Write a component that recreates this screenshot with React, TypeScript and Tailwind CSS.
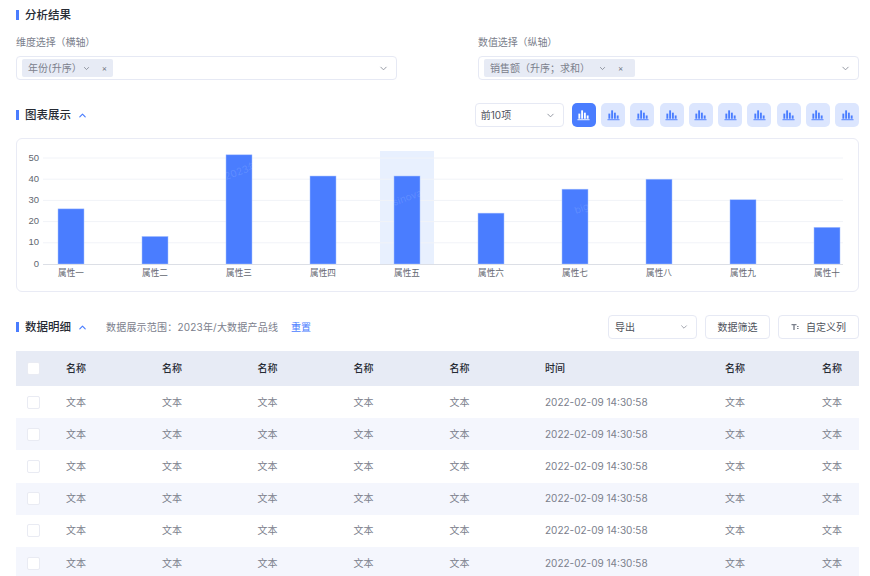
import React from "react";

const FONT = "[font-family:Inter,'Noto_Sans_CJK_SC',sans-serif]";

function Chevron({ className, up, sw = 1 }: { className?: string; up?: boolean; sw?: number }) {
  return (
    <svg viewBox="0 0 10 10" className={className} fill="none" stroke="currentColor" strokeWidth={sw} strokeLinecap="round" strokeLinejoin="round">
      <path d={up ? "M2 6.5 5 3.5 8 6.5" : "M2 3.5 5 6.5 8 3.5"} />
    </svg>
  );
}

function Heading({ text, toggle }: { text: string; toggle?: boolean }) {
  return (
    <div className="flex items-center">
      <span className="w-[3px] h-[10px] bg-[#4a7dff]" />
      <span className="ml-[6px] text-[11.5px] leading-[16px] font-medium text-[#262a33]">{text}</span>
      {toggle && <Chevron up sw={1.3} className="ml-[7px] w-[9px] h-[9px] text-[#4a7dff]" />}
    </div>
  );
}

function Tag({ text, width, gapA, gapB }: { text: string; width: string; gapA: string; gapB: string }) {
  return (
    <div className={`flex items-center h-[18px] rounded-[2px] bg-[#e7ebf5] pl-[6px] text-[10px] text-[#7b808c] ${width}`}>
      <span className="whitespace-nowrap">{text}</span>
      <Chevron className={`w-[7px] h-[7px] text-[#6d727e] ${gapA}`} />
      <span className={`text-[8px] leading-none text-[#6d727e] ${gapB}`}>×</span>
    </div>
  );
}

function Field({ label, tag }: { label: string; tag: React.ReactNode }) {
  return (
    <div className="w-[381px]">
      <div className="h-[16px] leading-[17px] text-[10px] text-[#7b808c] tracking-[-0.1px]">{label}</div>
      <div className="mt-[6px] flex items-center justify-between h-[24px] rounded-[4px] border border-[#e6e9f4] pl-[5px] pr-[8px] bg-white">
        {tag}
        <Chevron className="w-[9px] h-[9px] text-[#8a8f9a]" />
      </div>
    </div>
  );
}

function BarIcon({ active }: { active?: boolean }) {
  return (
    <div className={`flex items-center justify-center w-[24px] h-[24px] rounded-[5px] ${active ? "bg-[#4a7dff] text-white" : "bg-[#dce6fe] text-[#4a7dff]"}`}>
      <svg viewBox="0 0 14 12" className="w-[13px] h-[12px]" fill="currentColor">
        <rect x="1.5" y="4.5" width="2" height="5.5" />
        <rect x="4.5" y="1" width="2" height="9" />
        <rect x="7.5" y="3.5" width="2" height="6.5" />
        <rect x="10.5" y="6.5" width="2" height="3.5" />
        <rect x="0.5" y="10.6" width="13" height="1" />
      </svg>
    </div>
  );
}

const bars = [
  ["属性一", 26],
  ["属性二", 13],
  ["属性三", 51.5],
  ["属性四", 41.5],
  ["属性五", 41.5],
  ["属性六", 24],
  ["属性七", 35.3],
  ["属性八", 40],
  ["属性九", 30.3],
  ["属性十", 17.3],
] as const;

function Chart() {
  const y = (v: number) => 126 - v * 2.12;
  return (
    <svg viewBox="0 0 843 153" className="block w-[843px] h-[153px] absolute left-[-1px] top-[-1px]">
      <rect x="364" y="13" width="54" height="113" fill="#e8f0fe" />
      {[10, 20, 30, 40, 50].map((v) => (
        <line key={v} x1="27" x2="827" y1={y(v)} y2={y(v)} stroke="#f1f3f8" strokeWidth="1" />
      ))}
      {[0, 10, 20, 30, 40, 50].map((v) => (
        <text key={v} x="23" y={y(v) + 2.5} textAnchor="end" fontSize="9.5" fill="#63676f" className="[font-family:'Liberation_Sans',sans-serif]">{v}</text>
      ))}
      {bars.map(([name, v], i) => {
        const cx = 55 + i * 84;
        return (
          <g key={name}>
            <rect x={cx - 13} y={y(v)} width="26" height={126 - y(v)} fill="#4a7dff" stroke="#a9c2ff" strokeWidth="0.5" />
            <text x={cx} y="137.5" textAnchor="middle" fontSize="8.6" fill="#63676f">{name}</text>
          </g>
        );
      })}
      <line x1="27" x2="827" y1="126.5" y2="126.5" stroke="#dcdfe6" strokeWidth="1" />
      <g fill="#ffffff" fillOpacity="0.13" fontSize="10">
        <text transform="translate(210 42) rotate(-20)">2023年</text>
        <text transform="translate(378 68) rotate(-20)">sinova</text>
        <text transform="translate(560 76) rotate(-20)">big</text>
      </g>
    </svg>
  );
}

const cols = ["w-[96px]", "w-[95.5px]", "w-[96px]", "w-[96px]", "w-[95.5px]", "w-[180px]", "w-[97px]", "w-[37px]"];

function Cell({ className, children }: { className: string; children: React.ReactNode }) {
  return <div className={`shrink-0 whitespace-nowrap ${className}`}>{children}</div>;
}

function Row({ head, alt }: { head?: boolean; alt?: boolean }) {
  const name = head ? "名称" : "文本";
  const cellTexts = [name, name, name, name, name, head ? "时间" : "2022-02-09 14:30:58", name, name];
  return (
    <div
      className={`flex items-center text-[10px] ${
        head ? "h-[35px] bg-[#e7ebf5] text-[#262a33] font-medium" : `h-[32.2px] text-[#7b808c] ${alt ? "bg-[#f4f6fd]" : "bg-white"}`
      }`}
    >
      <Cell className="w-[50px] pl-[11px]">
        <div className="w-[13px] h-[13px] rounded-[2px] bg-white border border-[#e9ebf3]" />
      </Cell>
      {cellTexts.map((t, i) => (
        <Cell key={i} className={cols[i]}>{t}</Cell>
      ))}
    </div>
  );
}

export default function App() {
  return (
    <div className={`h-[576px] w-[870px] overflow-hidden bg-white pl-[16px] pr-[11px] pt-[7px] ${FONT}`}>
      <Heading text="分析结果" />
      <div className="mt-[11px] flex justify-between">
        <Field label="维度选择（横轴）" tag={<Tag text="年份(升序）" width="w-[91px]" gapA="ml-[1px]" gapB="ml-[12px]" />} />
        <Field label="数值选择（纵轴）" tag={<Tag text="销售额（升序；求和）" width="w-[151px]" gapA="ml-[9px]" gapB="ml-[12px]" />} />
      </div>

      <div className="mt-[23px] flex items-center justify-between h-[24px]">
        <Heading text="图表展示" toggle />
        <div className="flex items-center">
          <div className="flex items-center justify-between w-[89px] h-[24px] rounded-[4px] border border-[#e6e9f4] pl-[5px] pr-[8px] text-[10px] text-[#4e525c]">
            <span>前10项</span>
            <Chevron className="w-[9px] h-[9px] text-[#8a8f9a]" />
          </div>
          <div className="ml-[8px] flex gap-[5.25px]">
            {Array.from({ length: 10 }).map((_, i) => (
              <BarIcon key={i} active={i === 0} />
            ))}
          </div>
        </div>
      </div>

      <div className="relative mt-[11px] h-[154px] rounded-[6px] border border-[#e9ebf5]">
        <Chart />
      </div>

      <div className="mt-[23px] flex items-center justify-between h-[24px]">
        <div className="flex items-center">
          <Heading text="数据明细" toggle />
          <span className="ml-[19px] text-[10px] tracking-[0.2px] text-[#7b808c]">数据展示范围：2023年/大数据产品线</span>
          <span className="ml-[13px] text-[10px] text-[#4a7dff]">重置</span>
        </div>
        <div className="flex items-center text-[10px] text-[#4e525c]">
          <div className="flex items-center justify-between w-[89px] h-[24px] rounded-[4px] border border-[#e6e9f4] pl-[6px] pr-[8px]">
            <span>导出</span>
            <Chevron className="w-[8px] h-[8px] text-[#8a8f9a]" />
          </div>
          <div className="ml-[8px] flex items-center justify-center w-[65px] h-[24px] rounded-[4px] border border-[#e6e9f4]">数据筛选</div>
          <div className="ml-[8px] flex items-center justify-center w-[81px] h-[24px] rounded-[4px] border border-[#e6e9f4]">
            <svg viewBox="0 0 8 8" className="w-[8px] h-[8px] mr-[7px] text-[#7b808c]" fill="currentColor">
              <path d="M0.5 1H5.5V2.2H3.7V7H2.3V2.2H0.5Z" />
              <rect x="6" y="3" width="1.6" height="1" />
              <rect x="6" y="5" width="1.6" height="1" />
            </svg>
            <span>自定义列</span>
          </div>
        </div>
      </div>

      <div className="mt-[12px] w-[843px]">
        <Row head />
        {[false, true, false, true, false, true].map((alt, i) => (
          <Row key={i} alt={alt} />
        ))}
      </div>
    </div>
  );
}
